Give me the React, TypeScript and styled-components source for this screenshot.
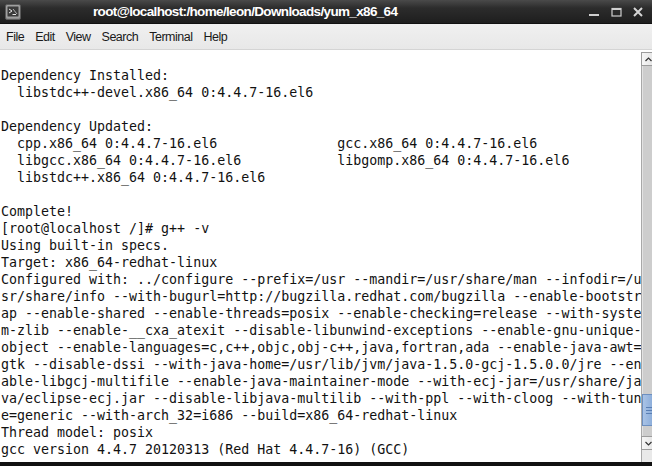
import React from "react";
import styled, { createGlobalStyle } from "styled-components";

const GlobalStyle = createGlobalStyle`
  html, body {
    margin: 0;
    padding: 0;
    background: #ffffff;
  }
  * {
    box-sizing: border-box;
  }
`;

const col = (a: string, b: string) => ("  " + a).padEnd(42, " ") + b;

const LINES: string[] = [
  "",
  "Dependency Installed:",
  "  libstdc++-devel.x86_64 0:4.4.7-16.el6",
  "",
  "Dependency Updated:",
  col("cpp.x86_64 0:4.4.7-16.el6", "gcc.x86_64 0:4.4.7-16.el6"),
  col("libgcc.x86_64 0:4.4.7-16.el6", "libgomp.x86_64 0:4.4.7-16.el6"),
  "  libstdc++.x86_64 0:4.4.7-16.el6",
  "",
  "Complete!",
  "[root@localhost /]# g++ -v",
  "Using built-in specs.",
  "Target: x86_64-redhat-linux",
  "Configured with: ../configure --prefix=/usr --mandir=/usr/share/man --infodir=/u",
  "sr/share/info --with-bugurl=http://bugzilla.redhat.com/bugzilla --enable-bootstr",
  "ap --enable-shared --enable-threads=posix --enable-checking=release --with-syste",
  "m-zlib --enable-__cxa_atexit --disable-libunwind-exceptions --enable-gnu-unique-",
  "object --enable-languages=c,c++,objc,obj-c++,java,fortran,ada --enable-java-awt=",
  "gtk --disable-dssi --with-java-home=/usr/lib/jvm/java-1.5.0-gcj-1.5.0.0/jre --en",
  "able-libgcj-multifile --enable-java-maintainer-mode --with-ecj-jar=/usr/share/ja",
  "va/eclipse-ecj.jar --disable-libjava-multilib --with-ppl --with-cloog --with-tun",
  "e=generic --with-arch_32=i686 --build=x86_64-redhat-linux",
  "Thread model: posix",
  "gcc version 4.4.7 20120313 (Red Hat 4.4.7-16) (GCC)",
];

const MENU = ["File", "Edit", "View", "Search", "Terminal", "Help"];

const App = () => {
  return (
    <>
      <GlobalStyle />
      <Window>
        <TitleBar>
          <WindowIcon>
            <svg width="16" height="16" viewBox="0 0 16 16">
              <rect x="0.5" y="0.5" width="15" height="15" rx="1.5" fill="#8d8d8d" stroke="#5a5a5a" />
              <rect x="2" y="2" width="12" height="11" fill="#3b3b3b" stroke="#b9b9b9" strokeWidth="0.8" />
              <path d="M4 5 L7 7 L4 9" stroke="#e6e6e6" strokeWidth="1" fill="none" />
              <path d="M8 5 L12 10" stroke="#cfcfcf" strokeWidth="0.8" />
              <path d="M7.5 10.5 H11" stroke="#e6e6e6" strokeWidth="1" />
            </svg>
          </WindowIcon>
          <Title>root@localhost:/home/leon/Downloads/yum_x86_64</Title>
          <Controls>
            <ControlButton title="Minimize">
              <svg width="10" height="10" viewBox="0 0 10 10">
                <rect x="0" y="7" width="10" height="2" fill="#cfcfcf" />
              </svg>
            </ControlButton>
            <ControlButton title="Maximize">
              <svg width="11" height="10" viewBox="0 0 11 10">
                <rect x="1" y="1.5" width="9" height="7.5" fill="none" stroke="#cfcfcf" strokeWidth="1.2" />
                <rect x="1" y="1" width="9" height="2" fill="#cfcfcf" />
              </svg>
            </ControlButton>
            <ControlButton title="Close">
              <svg width="10" height="10" viewBox="0 0 10 10">
                <path d="M1 1 L9 9 M9 1 L1 9" stroke="#d6d6d6" strokeWidth="2" />
              </svg>
            </ControlButton>
          </Controls>
        </TitleBar>

        <MenuBar>
          {MENU.map((m) => (
            <MenuItem key={m}>{m}</MenuItem>
          ))}
        </MenuBar>

        <TerminalArea>
          <Screen>
            {LINES.map((line, i) => (
              <Line key={i}>{line || " "}</Line>
            ))}
          </Screen>
          <ScrollBar>
            <ScrollArrow>
              <svg width="7" height="5" viewBox="0 0 7 5">
                <path d="M0.5 4 L3.5 1 L6.5 4" stroke="#333" strokeWidth="1.2" fill="none" />
              </svg>
            </ScrollArrow>
            <Track>
              <Thumb>
                <Grip />
                <Grip />
                <Grip />
              </Thumb>
            </Track>
            <ScrollArrow>
              <svg width="7" height="5" viewBox="0 0 7 5">
                <path d="M0.5 1 L3.5 4 L6.5 1" stroke="#333" strokeWidth="1.2" fill="none" />
              </svg>
            </ScrollArrow>
            <TrackEnd />
          </ScrollBar>
        </TerminalArea>
        <BottomEdge />
      </Window>
    </>
  );
};

const Window = styled.div`
  width: 652px;
  height: 466px;
  display: flex;
  flex-direction: column;
  overflow: hidden;
  background: #ffffff;
`;

const TitleBar = styled.div`
  height: 24px;
  flex: none;
  display: flex;
  align-items: center;
  padding: 0 0 0 5px;
  background: linear-gradient(#4a4a4a 0%, #2c2c2c 35%, #1e1e1e 100%);
  border-bottom: 1px solid #111;
`;

const WindowIcon = styled.div`
  width: 16px;
  height: 16px;
  display: flex;
`;

const Title = styled.div`
  margin-left: 72px;
  font-family: "Liberation Sans", Arial, sans-serif;
  font-weight: bold;
  font-size: 13.5px;
  letter-spacing: -0.65px;
  color: #ffffff;
  white-space: nowrap;
  flex: 1;
`;

const Controls = styled.div`
  display: flex;
  align-items: center;
  padding-right: 3px;
`;

const ControlButton = styled.div`
  width: 22px;
  height: 18px;
  display: flex;
  align-items: center;
  justify-content: center;
`;

const MenuBar = styled.div`
  height: 26px;
  flex: none;
  display: flex;
  align-items: center;
  padding-left: 0.5px;
  background: linear-gradient(#f0f0f0, #e8e8e8);
  border-bottom: 1px solid #d4d4d4;
`;

const MenuItem = styled.div`
  padding: 0 5.5px;
  font-family: "Liberation Sans", Arial, sans-serif;
  font-size: 12.5px;
  letter-spacing: -0.5px;
  color: #1a1a1a;
`;

const TerminalArea = styled.div`
  flex: 1;
  display: flex;
  min-height: 0;
  background: #ffffff;
`;

const Screen = styled.div`
  width: 641px;
  flex: none;
  padding-left: 1px;
  font-family: "DejaVu Sans Mono", "Liberation Mono", monospace;
  font-size: 13.3px;
  line-height: 17px;
  color: #111111;
  overflow: hidden;
`;

const Line = styled.div`
  white-space: pre;
  height: 17px;
`;

const ScrollBar = styled.div`
  flex: 1;
  display: flex;
  flex-direction: column;
  padding-top: 2px;
  background: #ffffff;
`;

const ScrollArrow = styled.div`
  height: 14px;
  flex: none;
  display: flex;
  align-items: center;
  justify-content: center;
  padding-left: 1px;
  background: linear-gradient(90deg, #f6f6f6, #e4e4e4);
  border: 1px solid #9c9c9c;
  border-right: none;
`;

const Track = styled.div`
  flex: 1;
  display: flex;
  flex-direction: column;
  justify-content: flex-end;
  padding-bottom: 10px;
  background: #cdcdcd;
  border-left: 1px solid #a8a8a8;
  box-shadow: inset 1px 0 0 #e2e2e2;
`;

const Thumb = styled.div`
  height: 32px;
  display: flex;
  flex-direction: column;
  justify-content: center;
  gap: 2px;
  padding-left: 3px;
  background: linear-gradient(90deg, #a9c3e6, #88aad8);
  border: 1px solid #6c8fc0;
  border-right: none;
`;

const Grip = styled.div`
  height: 1px;
  width: 8px;
  background: #5a7fb4;
`;

const TrackEnd = styled.div`
  height: 12px;
  flex: none;
  border-left: 1px solid #a8a8a8;
  background: #e9e9e9;
`;

const BottomEdge = styled.div`
  height: 4px;
  flex: none;
  background: #111111;
`;

export default App;
